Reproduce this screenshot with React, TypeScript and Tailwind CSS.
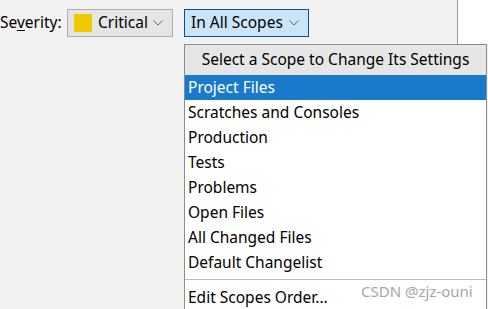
import React from 'react';

const scopes = [
  'Project Files',
  'Scratches and Consoles',
  'Production',
  'Tests',
  'Problems',
  'Open Files',
  'All Changed Files',
  'Default Changelist',
];

const Chevron: React.FC<{ color?: string }> = ({ color = '#6b6b6b' }) => (
  <svg width="10" height="6" viewBox="0 0 10 6" className="shrink-0">
    <path d="M0.5 0.5 L5 5 L9.5 0.5" fill="none" stroke={color} strokeWidth="1" />
  </svg>
);

const App: React.FC = () => {
  return (
    <div
      className="relative w-[488px] h-[309px] overflow-hidden bg-[#f2f2f2] text-[15.5px] text-black"
      style={{ fontFamily: '"Noto Sans", "Open Sans", sans-serif' }}
    >
      <div className="flex h-[44px]">
        <div className="w-[457px] flex items-center pt-[2px]">
          <span className="w-[67px] shrink-0">
            Se<span className="underline underline-offset-2">v</span>erity:
          </span>
          <div className="flex items-center w-[106px] h-[28px] border border-[#adadad] bg-[#e5e5e5] pl-[6px] pr-[9px]">
            <span className="w-[18px] h-[18px] bg-[#f0c800] mr-[6px]" />
            <span className="flex-1">Critical</span>
            <Chevron />
          </div>
          <div className="ml-[11px] flex items-center w-[125px] h-[28px] border border-[#005499] bg-[#cce4f7] pl-[6px] pr-[9px]">
            <span className="flex-1">In All Scopes</span>
            <Chevron />
          </div>
        </div>
        <div className="flex-1 border-l border-[#9a9a9a] bg-white" />
      </div>

      <div className="absolute left-[184px] top-[44px] w-[303px] h-[270px] border border-[#8c8c8c] bg-white">
        <div className="h-[30px] flex items-center justify-center bg-[#e6e6e6]">
          Select a Scope to Change Its Settings
        </div>
        <ul>
          {scopes.map((s, i) => (
            <li
              key={s}
              className={
                i === 0
                  ? 'h-[25px] flex items-center pl-[3px] bg-[#1979ca] text-white'
                  : 'h-[25px] flex items-center pl-[3px]'
              }
            >
              {s}
            </li>
          ))}
        </ul>
        <div className="mt-[4px] border-t border-[#bdbdbd]" />
        <div className="h-[25px] mt-[5px] flex items-center pl-[3px]">Edit Scopes Order...</div>
      </div>

      <div className="absolute left-[361px] top-[280px] text-[15px] text-[#a6a6a6]">CSDN @zjz-ouni</div>
    </div>
  );
};

export default App;
